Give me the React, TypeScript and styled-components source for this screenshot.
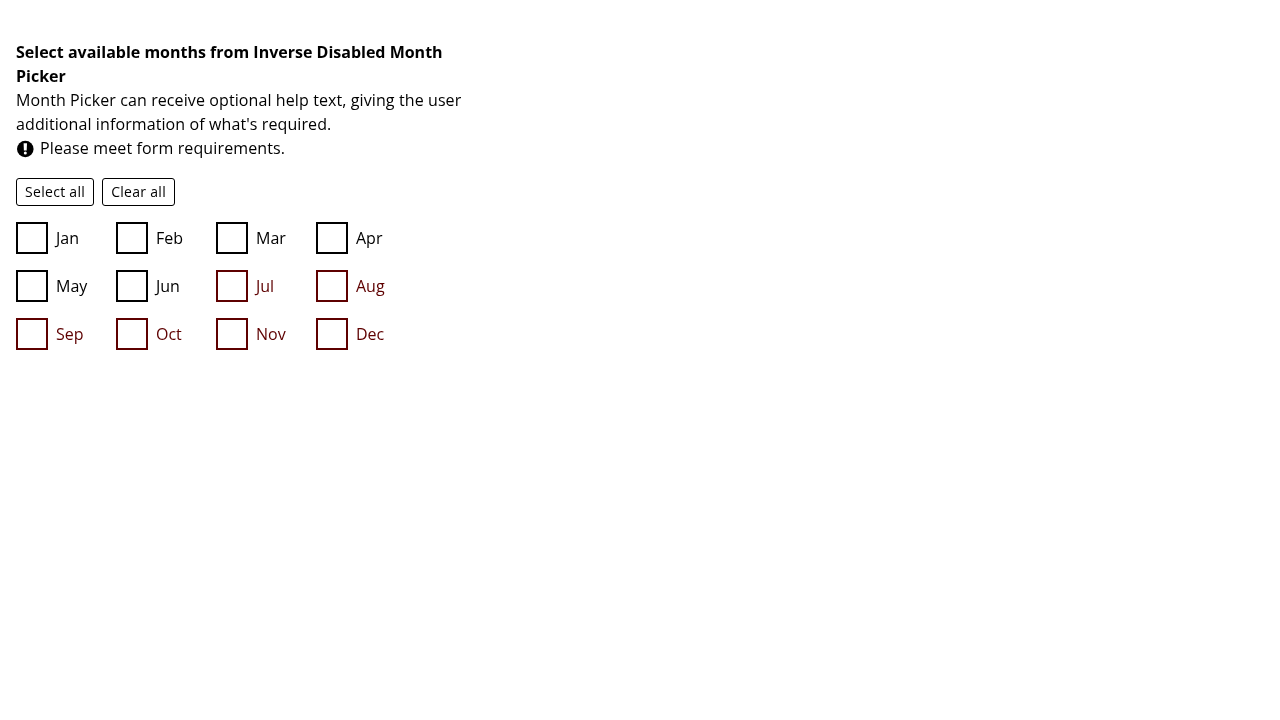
import React from "react";
import styled, { createGlobalStyle } from "styled-components";

const GlobalStyle = createGlobalStyle`
  *, *::before, *::after { box-sizing: border-box; }
  body {
    margin: 0;
    background: #fff;
    color: #000;
    font-family: "Open Sans", "Noto Sans", sans-serif;
    font-size: 16px;
    line-height: 24px;
  }
`;

const Picker = styled.fieldset`
  width: 480px;
  margin: 0;
  padding: 40px 16px 0;
  border: 0;
  will-change: transform;
`;

const Title = styled.div`
  font-weight: 700;
`;

const Help = styled.div`
  letter-spacing: 0.1px;
`;

const Message = styled.div`
  display: flex;
  align-items: center;
  gap: 4px;
  letter-spacing: 0.13px;
`;

const MessageIcon = styled.svg`
  flex: none;
  width: 20px;
  height: 20px;
  margin: 2px 0 0;
`;

const Actions = styled.div`
  display: flex;
  gap: 8px;
  margin: 18px 0 16px;
`;

const ActionButton = styled.button`
  height: 28px;
  padding: 0 8px;
  border: 1px solid #000;
  border-radius: 3px;
  background: transparent;
  color: #000;
  font: inherit;
  font-size: 14px;
  line-height: 26px;
  letter-spacing: 0.3px;
`;

const Months = styled.div`
  display: grid;
  grid-template-columns: repeat(4, 100px);
  row-gap: 16px;
`;

const Month = styled.label<{ $disabled: boolean }>`
  display: flex;
  align-items: center;
  gap: 8px;
  height: 32px;
  color: ${(p) => (p.$disabled ? "#5e0000" : "#000")};
`;

const Box = styled.input`
  appearance: none;
  width: 32px;
  height: 32px;
  margin: 0;
  border: 2px solid currentColor;
  background: transparent;
  color: inherit;
`;

const names = ["Jan", "Feb", "Mar", "Apr", "May", "Jun", "Jul", "Aug", "Sep", "Oct", "Nov", "Dec"];
const availableCount = 6;

export default function App() {
  return (
    <>
      <GlobalStyle />
      <Picker>
        <Title>Select available months from Inverse Disabled Month Picker</Title>
        <Help>
          Month Picker can receive optional help text, giving the user additional information of what's required.
        </Help>
        <Message>
          <MessageIcon viewBox="0 0 20 20" aria-hidden="true">
            <circle cx="9.3" cy="10" r="8.3" />
            <path d="M7.6 4.3h3.4l-.3 7.2H7.9z" fill="#fff" />
            <circle cx="9.3" cy="14" r="1.5" fill="#fff" />
          </MessageIcon>
          Please meet form requirements.
        </Message>
        <Actions>
          <ActionButton type="button">Select all</ActionButton>
          <ActionButton type="button">Clear all</ActionButton>
        </Actions>
        <Months>
          {names.map((name, index) => (
            <Month key={name} $disabled={index >= availableCount}>
              <Box type="checkbox" disabled={index >= availableCount} />
              {name}
            </Month>
          ))}
        </Months>
      </Picker>
    </>
  );
}
